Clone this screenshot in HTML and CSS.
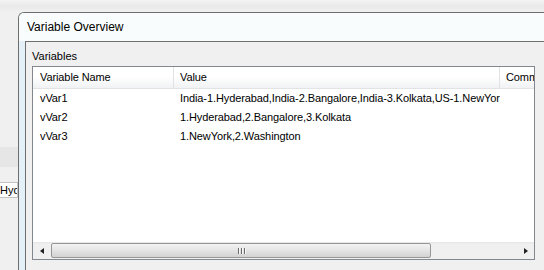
FILE: index.html
```html
<!DOCTYPE html>
<html lang="en">
<head>
    <meta charset="UTF-8">
    <title>Variable Overview</title>
    <link rel="stylesheet" href="styles.css">
</head>
<body>
    <div class="desktop">
        <!-- window behind the dialog -->
        <div class="behind">
            <div class="behind-band"></div>
            <div class="behind-field">Hyderabad</div>
        </div>

        <div class="window">
            <div class="titlebar">Variable Overview</div>
            <div class="client">
                <div class="group-label">Variables</div>
                <div class="listview">
                    <div class="lv-header">
                        <div class="col col-name">Variable Name</div>
                        <div class="col col-value">Value</div>
                        <div class="col col-comment">Comment</div>
                    </div>
                    <div class="lv-body">
                        <div class="lv-row">
                            <div class="cell col-name">vVar1</div>
                            <div class="cell col-value">India-1.Hyderabad,India-2.Bangalore,India-3.Kolkata,US-1.NewYork,US-2.Washington</div>
                            <div class="cell col-comment"></div>
                        </div>
                        <div class="lv-row">
                            <div class="cell col-name">vVar2</div>
                            <div class="cell col-value">1.Hyderabad,2.Bangalore,3.Kolkata</div>
                            <div class="cell col-comment"></div>
                        </div>
                        <div class="lv-row">
                            <div class="cell col-name">vVar3</div>
                            <div class="cell col-value">1.NewYork,2.Washington</div>
                            <div class="cell col-comment"></div>
                        </div>
                    </div>
                    <!-- horizontal scrollbar -->
                    <div class="hscroll">
                        <div class="sb-btn"><span class="arrow-left"></span></div>
                        <div class="sb-track">
                            <div class="sb-thumb">
                                <span class="grip"></span><span class="grip"></span><span class="grip"></span>
                            </div>
                        </div>
                        <div class="sb-btn"><span class="arrow-right"></span></div>
                    </div>
                </div>
            </div>
        </div>
    </div>
</body>
</html>
```

FILE: styles.css
```css
/* General */
body, html {
    margin: 0;
    padding: 0;
}

body {
    width: 544px;
    height: 270px;
    overflow: hidden;
    background: linear-gradient(#f4f4f4, #e9e9e9 6px, #f0f0f0 12px);
    font-family: "Liberation Sans", Arial, sans-serif;
    font-size: 11px;
    color: #000;
}

.desktop {
    display: flex;
    height: 270px;
}

/* Window behind the dialog */
.behind {
    width: 18px;
    flex: none;
    padding-top: 147px;
    box-sizing: border-box;
    overflow: hidden;
}

.behind-band {
    height: 20px;
    background-color: #e6e6e6;
}

.behind-field {
    margin-top: 15px;
    height: 14px;
    line-height: 14px;
    background-color: #fff;
    border: 1px solid #c3c3c3;
    border-left: none;
    white-space: nowrap;
    overflow: hidden;
}

/* Dialog window */
.window {
    flex: none;
    width: 560px;
    margin-top: 12px;
    padding-left: 6px;
    border-top: 1px solid #6d6d6d;
    border-left: 1px solid #6d6d6d;
    border-top-left-radius: 6px;
    background: linear-gradient(to right, #e4f0f8, #edf5fa);
    display: flex;
    flex-direction: column;
}

.titlebar {
    height: 28px;
    margin-left: -6px;
    padding-left: 8px;
    border-top-left-radius: 5px;
    background-color: #f8fcfc;
    display: flex;
    align-items: center;
    font-size: 12px;
}

.client {
    flex: 1;
    padding: 8px 0 0 6px;
    border-top: 1px solid #6f6f6f;
    border-left: 1px solid #6f6f6f;
    background-color: #f0f0f0;
}

.group-label {
    height: 13px;
    line-height: 13px;
    margin-bottom: 3px;
}

/* List view */
.listview {
    width: 503px;
    height: 194px;
    box-sizing: border-box;
    border: 1px solid #828790;
    background-color: #fff;
    display: flex;
    flex-direction: column;
    letter-spacing: -0.1px;
}

.lv-header {
    display: flex;
    height: 22px;
    box-sizing: border-box;
    border-bottom: 1px solid #e2e3e5;
    background: linear-gradient(#fff, #fff 45%, #f1f2f4);
}

.col {
    line-height: 21px;
    border-right: 1px solid #e2e3e5;
    box-sizing: border-box;
    white-space: nowrap;
    overflow: hidden;
}

.col-name {
    flex: none;
    width: 141px;
    padding-left: 7px;
    box-sizing: border-box;
}

.col-value {
    flex: none;
    width: 326px;
    padding-left: 6px;
    box-sizing: border-box;
}

.col-comment {
    flex: 1;
    padding-left: 6px;
    border-right: none;
}

.lv-body {
    flex: 1;
}

.lv-row {
    display: flex;
    height: 19px;
    line-height: 19px;
}

.cell {
    white-space: nowrap;
    overflow: hidden;
}

/* Horizontal scrollbar */
.hscroll {
    display: flex;
    height: 17px;
    background: linear-gradient(#e4e4e4, #f0f0f0 2px, #f0f0f0);
}

.sb-btn {
    width: 17px;
    flex: none;
    display: flex;
    align-items: center;
    justify-content: center;
}

.arrow-left {
    width: 0;
    height: 0;
    border-top: 3px solid transparent;
    border-bottom: 3px solid transparent;
    border-right: 4px solid #222;
}

.arrow-right {
    width: 0;
    height: 0;
    border-top: 3px solid transparent;
    border-bottom: 3px solid transparent;
    border-left: 4px solid #222;
}

.sb-track {
    flex: 1;
    padding-top: 1px;
}

.sb-thumb {
    width: 380px;
    height: 15px;
    margin-left: 1px;
    box-sizing: border-box;
    border: 1px solid #979797;
    border-radius: 2px;
    background: linear-gradient(#f3f3f3, #e4e4e4 50%, #d2d2d2);
    display: flex;
    align-items: center;
    justify-content: center;
    gap: 2px;
}

.grip {
    width: 1px;
    height: 6px;
    background-color: #6a6a6a;
    box-shadow: 1px 0 0 #f8f8f8;
}
```
